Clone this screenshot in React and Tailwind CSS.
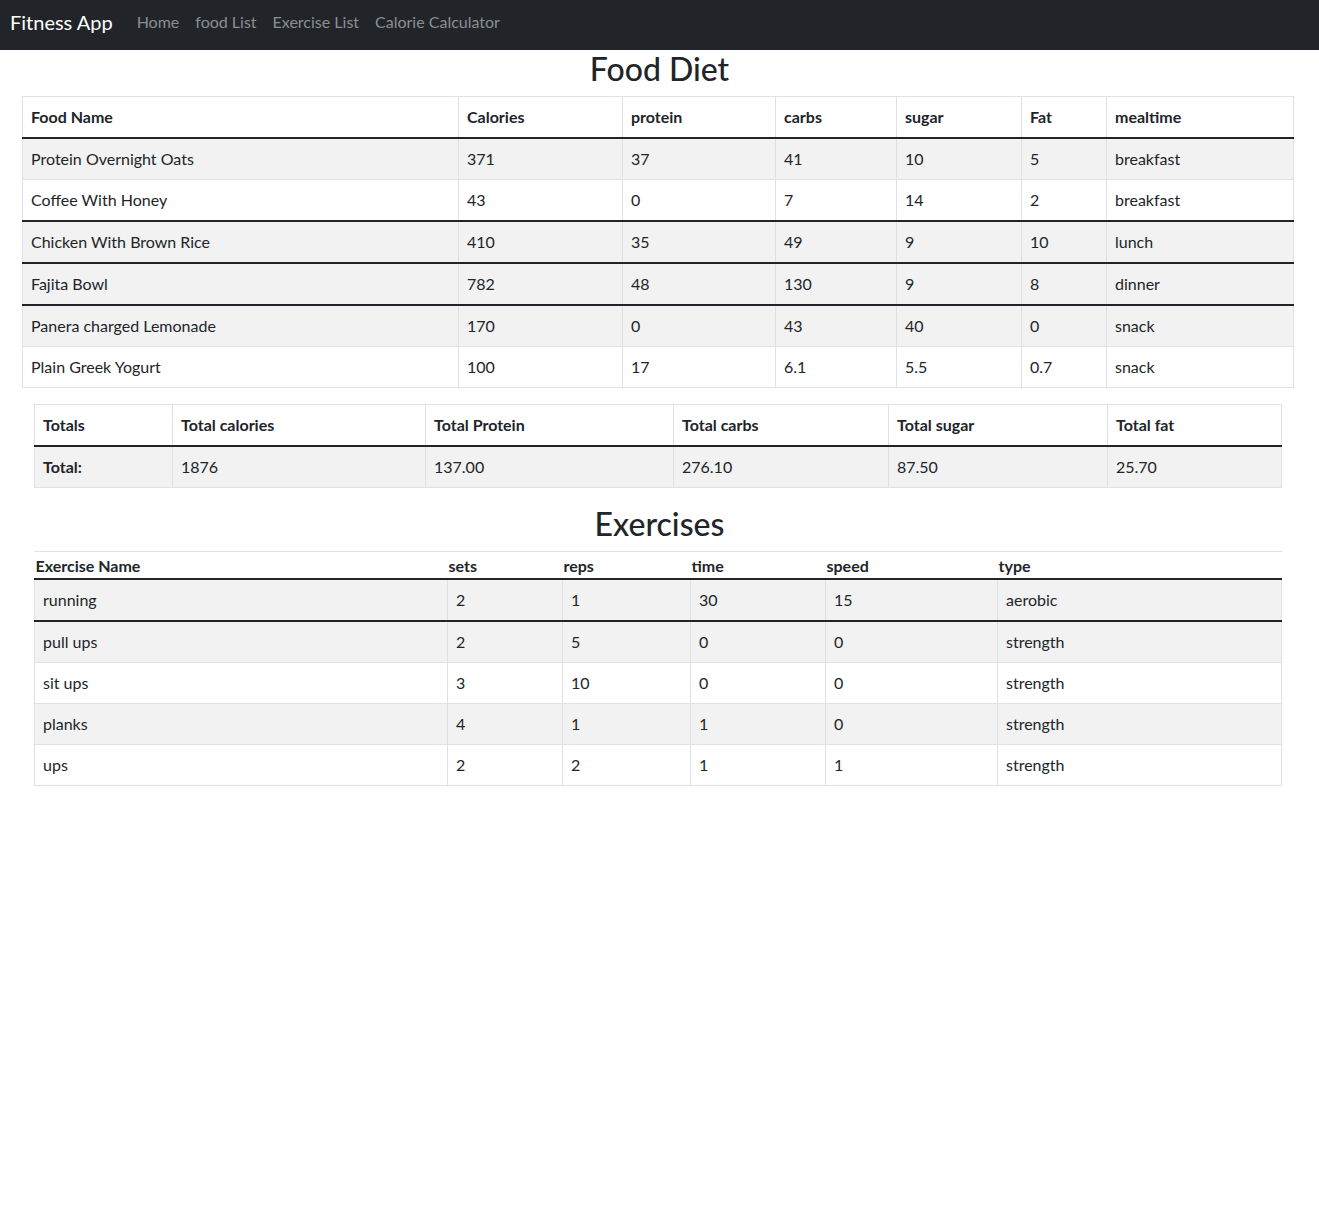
const FOOD_GROUPS = [
  [
    ['Protein Overnight Oats', '371', '37', '41', '10', '5', 'breakfast'],
    ['Coffee With Honey', '43', '0', '7', '14', '2', 'breakfast'],
  ],
  [['Chicken With Brown Rice', '410', '35', '49', '9', '10', 'lunch']],
  [['Fajita Bowl', '782', '48', '130', '9', '8', 'dinner']],
  [
    ['Panera charged Lemonade', '170', '0', '43', '40', '0', 'snack'],
    ['Plain Greek Yogurt', '100', '17', '6.1', '5.5', '0.7', 'snack'],
  ],
];

const FOOD_HEAD = ['Food Name', 'Calories', 'protein', 'carbs', 'sugar', 'Fat', 'mealtime'];
const FOOD_COLS = ['w-[436px]', 'w-[164px]', 'w-[153px]', 'w-[121px]', 'w-[125px]', 'w-[85px]', 'w-[187px]'];

const TOTAL_HEAD = ['Totals', 'Total calories', 'Total Protein', 'Total carbs', 'Total sugar', 'Total fat'];
const TOTAL_ROW = ['1876', '137.00', '276.10', '87.50', '25.70'];
const TOTAL_COLS = ['w-[138px]', 'w-[253px]', 'w-[248px]', 'w-[215px]', 'w-[219px]', 'w-[174px]'];

const EX_HEAD = ['Exercise Name', 'sets', 'reps', 'time', 'speed', 'type'];
const EX_COLS = ['w-[413px]', 'w-[115px]', 'w-[128px]', 'w-[135px]', 'w-[172px]', 'w-[284px]'];
const EX_GROUPS = [
  [['running', '2', '1', '30', '15', 'aerobic']],
  [
    ['pull ups', '2', '5', '0', '0', 'strength'],
    ['sit ups', '3', '10', '0', '0', 'strength'],
    ['planks', '4', '1', '1', '0', 'strength'],
    ['ups', '2', '2', '1', '1', 'strength'],
  ],
];

const cell = 'border border-[#dee2e6] px-2 py-2 text-left align-top leading-6';

function GroupRows({ groups }) {
  return groups.map((rows, g) =>
    rows.map((row, i) => (
      <tr key={`${g}-${i}`} className={i % 2 === 0 ? 'bg-[#f2f2f2]' : 'bg-white'}>
        {row.map((v, c) => (
          <td key={c} className={`${cell} ${i === 0 && g > 0 ? 'border-t-2 border-t-[#212529]' : ''}`}>{v}</td>
        ))}
      </tr>
    ))
  );
}

export default function App() {
  return (
    <div className="min-h-[1211px] bg-white text-[#212529] text-base" style={{ fontFamily: 'Lato, "Open Sans", sans-serif' }}>
      {/* Navbar */}
      <nav className="h-[50px] bg-[#212529] flex items-center px-[10px] pb-[6px]">
        <span className="text-white text-xl mr-4">Fitness App</span>
        <div className="flex items-center">
          {['Home', 'food List', 'Exercise List', 'Calorie Calculator'].map(l => (
            <a key={l} className="px-2 text-[#8c8e91]">{l}</a>
          ))}
        </div>
      </nav>

      {/* Food Diet */}
      <h2 className="text-[32px] leading-[38px] font-medium text-center mb-2">Food Diet</h2>
      <table className="table-fixed w-[1271px] ml-[22px] mb-4 border border-[#dee2e6]">
        <thead>
          <tr>
            {FOOD_HEAD.map((h, i) => (
              <th key={h} className={`${cell} ${FOOD_COLS[i]} font-bold border-b-2 border-b-[#212529]`}>{h}</th>
            ))}
          </tr>
        </thead>
        <tbody>
          <GroupRows groups={FOOD_GROUPS} />
        </tbody>
      </table>

      {/* Totals */}
      <table className="table-fixed w-[1247px] ml-[34px] mb-4 border border-[#dee2e6]">
        <thead>
          <tr>
            {TOTAL_HEAD.map((h, i) => (
              <th key={h} className={`${cell} ${TOTAL_COLS[i]} font-bold border-b-2 border-b-[#212529]`}>{h}</th>
            ))}
          </tr>
        </thead>
        <tbody>
          <tr className="bg-[#f2f2f2]">
            <th className={`${cell} font-bold`}>Total:</th>
            {TOTAL_ROW.map((v, i) => (
              <td key={i} className={cell}>{v}</td>
            ))}
          </tr>
        </tbody>
      </table>

      {/* Exercises */}
      <h2 className="text-[32px] leading-[38px] font-medium text-center mb-2 pt-[1px]">Exercises</h2>
      <table className="table-fixed w-[1247px] ml-[34px] mb-4">
        <thead>
          <tr className="border-t border-t-[#dee2e6]">
            {EX_HEAD.map((h, i) => (
              <th key={h} className={`${EX_COLS[i]} px-[1px] pt-[2px] pb-0 text-left font-bold leading-6 border-b-2 border-b-[#212529]`}>{h}</th>
            ))}
          </tr>
        </thead>
        <tbody>
          <GroupRows groups={EX_GROUPS} />
        </tbody>
      </table>
    </div>
  );
}
